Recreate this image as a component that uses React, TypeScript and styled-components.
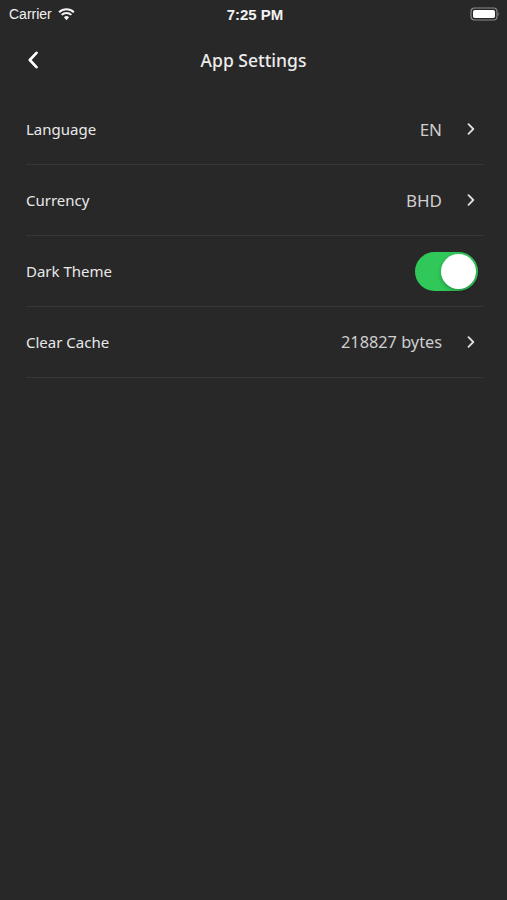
import styled, { createGlobalStyle } from "styled-components";
import { useState } from "react";

const GlobalStyle = createGlobalStyle`
  html, body {
    margin: 0;
    padding: 0;
    background: #282828;
  }
  body {
    font-family: "Noto Sans", "Open Sans", sans-serif;
    color: #e6e6e6;
  }
`;

const Screen = styled.div`
  width: 507px;
  height: 900px;
  background: #282828;
  display: flex;
  flex-direction: column;
`;

const StatusBar = styled.div`
  height: 28px;
  display: grid;
  grid-template-columns: 1fr auto 1fr;
  align-items: center;
  padding: 0 6px 0 9px;
  font-family: "Liberation Sans", Arial, sans-serif;
  color: #f2f2f2;
`;

const Carrier = styled.div`
  display: flex;
  align-items: center;
  gap: 6px;
  font-size: 14px;
`;

const Clock = styled.div`
  font-size: 15px;
  font-weight: 700;
`;

const BatteryBox = styled.div`
  justify-self: end;
  display: flex;
  align-items: center;
`;

const NavBar = styled.div`
  height: 64px;
  display: grid;
  grid-template-columns: 60px 1fr 60px;
  align-items: center;
`;

const BackButton = styled.button`
  background: none;
  border: none;
  padding: 0 0 0 27px;
  display: flex;
  align-items: center;
  cursor: pointer;
`;

const Title = styled.h1`
  margin: 0;
  text-align: center;
  font-size: 17.5px;
  font-weight: 500;
  color: #ececec;
`;

const List = styled.div`
  display: flex;
  flex-direction: column;
  padding: 0 24px 0 26px;
  margin-top: 2px;
`;

const Row = styled.div`
  height: 70px;
  display: flex;
  align-items: center;
  justify-content: space-between;
  border-bottom: 1.5px solid #363636;
`;

const Label = styled.span`
  font-size: 15px;
  color: #e8e8e8;
`;

const Trailing = styled.div`
  display: flex;
  align-items: center;
  gap: 25px;
  padding-right: 8px;
`;

const Value = styled.span<{ $size?: number }>`
  font-size: ${(p) => p.$size ?? 17}px;
  color: #cfcfcf;
`;

const SwitchTrack = styled.button<{ $on: boolean }>`
  width: 63px;
  height: 39px;
  border-radius: 20px;
  border: none;
  padding: 2px;
  background: ${(p) => (p.$on ? "#31c85a" : "#4a4a4a")};
  display: flex;
  justify-content: ${(p) => (p.$on ? "flex-end" : "flex-start")};
  align-items: center;
  cursor: pointer;
  margin-right: 5px;
`;

const SwitchThumb = styled.span`
  width: 35px;
  height: 35px;
  border-radius: 50%;
  background: #ffffff;
  box-shadow: 0 2px 4px rgba(0, 0, 0, 0.25);
`;

const Chevron = () => (
  <svg width="8" height="12" viewBox="0 0 8 12">
    <path d="M1.5 1.2 L6.3 6 L1.5 10.8" fill="none" stroke="#e0e0e0" strokeWidth="1.8" strokeLinecap="round" strokeLinejoin="round" />
  </svg>
);

const settings = [
  { label: "Language", value: "EN" },
  { label: "Currency", value: "BHD" },
];

export default function App() {
  const [dark, setDark] = useState(true);

  return (
    <>
      <GlobalStyle />
      <Screen>
        <StatusBar>
          <Carrier>
            Carrier
            <svg width="17" height="13" viewBox="0 0 17 13">
              <path d="M8.5 12.2 L5.9 9.3 A3.8 3.8 0 0 1 11.1 9.3 Z" fill="#f2f2f2" />
              <path d="M3.6 6.9 A7 7 0 0 1 13.4 6.9" fill="none" stroke="#f2f2f2" strokeWidth="2" />
              <path d="M1.1 4.2 A10.6 10.6 0 0 1 15.9 4.2" fill="none" stroke="#f2f2f2" strokeWidth="2" />
            </svg>
          </Carrier>
          <Clock>7:25 PM</Clock>
          <BatteryBox>
            <svg width="31" height="14" viewBox="0 0 31 14">
              <rect x="1" y="1" width="26" height="12" rx="3.5" fill="none" stroke="#8a8a8a" strokeWidth="1.2" />
              <rect x="3" y="3" width="22" height="8" rx="1.8" fill="#ffffff" />
              <path d="M28.5 5 Q30.3 7 28.5 9 Z" fill="#8a8a8a" />
            </svg>
          </BatteryBox>
        </StatusBar>
        <NavBar>
          <BackButton aria-label="Back">
            <svg width="12" height="18" viewBox="0 0 12 18">
              <path d="M9.5 1.8 L2.8 9 L9.5 16.2" fill="none" stroke="#ffffff" strokeWidth="2.6" strokeLinecap="round" strokeLinejoin="round" />
            </svg>
          </BackButton>
          <Title>App Settings</Title>
          <span />
        </NavBar>
        <List>
          {settings.map((s) => (
            <Row key={s.label}>
              <Label>{s.label}</Label>
              <Trailing>
                <Value>{s.value}</Value>
                <Chevron />
              </Trailing>
            </Row>
          ))}
          <Row>
            <Label>Dark Theme</Label>
            <SwitchTrack $on={dark} onClick={() => setDark(!dark)} aria-label="Dark Theme">
              <SwitchThumb />
            </SwitchTrack>
          </Row>
          <Row>
            <Label>Clear Cache</Label>
            <Trailing>
              <Value $size={16.3}>218827 bytes</Value>
              <Chevron />
            </Trailing>
          </Row>
        </List>
      </Screen>
    </>
  );
}
